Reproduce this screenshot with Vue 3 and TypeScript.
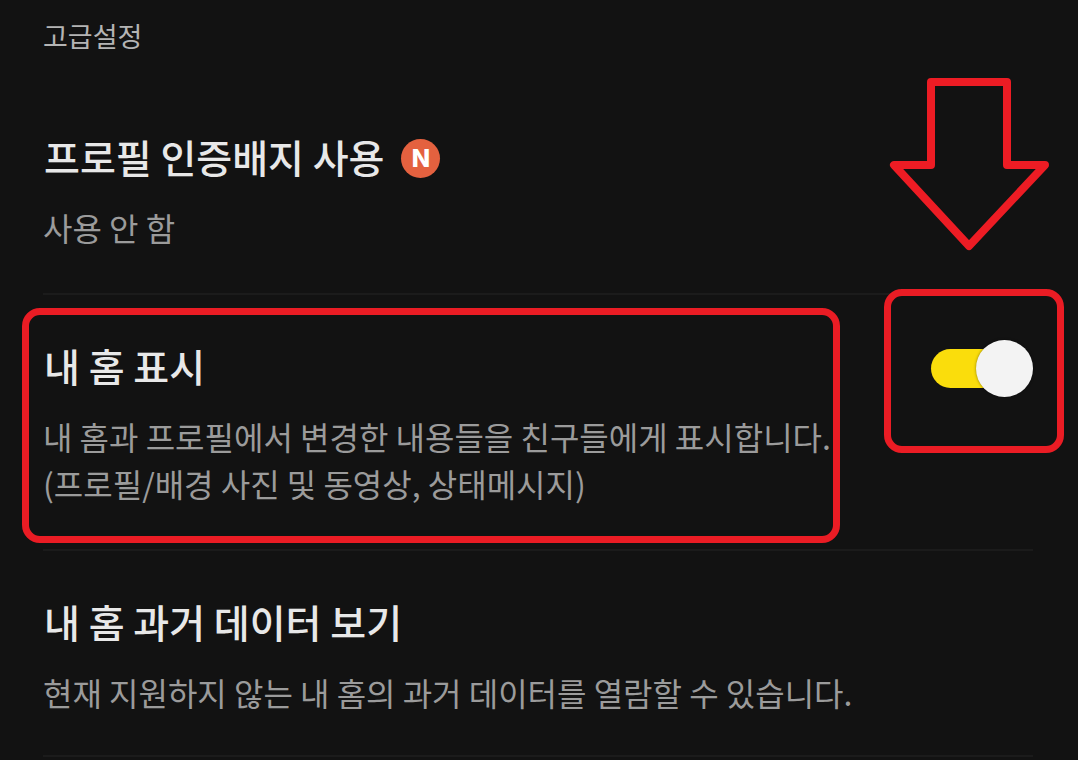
<script setup lang="ts">
import { ref } from 'vue'

const showHome = ref<boolean>(true)
</script>

<template>
  <main class="settings">
    <h1 class="section-title">고급설정</h1>

    <section class="row first">
      <div class="copy">
        <h2 class="title">프로필 인증배지 사용 <span class="badge">N</span></h2>
        <p class="desc">사용 안 함</p>
      </div>
    </section>

    <section class="row">
      <div class="copy">
        <h2 class="title"><label for="show-home">내 홈 표시</label></h2>
        <p id="show-home-desc" class="desc">
          내 홈과 프로필에서 변경한 내용들을 친구들에게 표시합니다.<br />(프로필/배경 사진 및 동영상, 상태메시지)
        </p>
        <span class="mark mark-copy" aria-hidden="true"></span>
      </div>
      <div class="control">
        <input
          id="show-home"
          v-model="showHome"
          class="switch"
          type="checkbox"
          role="switch"
          aria-describedby="show-home-desc"
        />
        <span class="mark mark-switch" aria-hidden="true"></span>
        <svg class="arrow" width="160" height="174" viewBox="0 0 160 174" aria-hidden="true">
          <path
            d="M42 5H118V88H156L80 169L5 88H42Z"
            fill="none"
            stroke="#ed1c24"
            stroke-width="8"
            stroke-linejoin="round"
          />
        </svg>
      </div>
    </section>

    <section class="row last">
      <div class="copy">
        <h2 class="title">내 홈 과거 데이터 보기</h2>
        <p class="desc">현재 지원하지 않는 내 홈의 과거 데이터를 열람할 수 있습니다.</p>
      </div>
    </section>
  </main>
</template>

<style>
body {
  margin: 0;
  background: #121212;
}
</style>

<style scoped>
.settings {
  box-sizing: border-box;
  min-height: 100vh;
  padding: 16px 45px 0 43px;
  overflow: hidden;
  background: #121212;
  color: #e8e8e8;
  font-family: 'Noto Sans CJK KR', sans-serif;
}

.section-title {
  margin: 0;
  color: #b4b4b4;
  font-size: 27px;
  font-weight: 400;
  line-height: 40px;
}

.row {
  display: flex;
  justify-content: space-between;
  padding: 45px 0 42px;
  border-bottom: 2px solid #1b1b1b;
}

.row.first {
  padding-top: 75px;
}

.row.last {
  padding-bottom: 39px;
}

.copy {
  position: relative;
}

.title {
  display: flex;
  align-items: center;
  gap: 17px;
  margin: 0 0 23px;
  padding-left: 1px;
  font-size: 39px;
  font-weight: 500;
  line-height: 50px;
}

.badge {
  width: 39px;
  height: 39px;
  margin-top: 4px;
  border-radius: 50%;
  background: #e4613f;
  color: #fff;
  font-family: Inter, sans-serif;
  font-size: 24px;
  font-weight: 800;
  line-height: 39px;
  text-align: center;
}

.desc {
  margin: 0;
  color: #9b9b9b;
  font-size: 32px;
  line-height: 47px;
}

.control {
  position: relative;
  flex: none;
  width: 102px;
  height: 57px;
}

.switch {
  position: relative;
  display: block;
  width: 100%;
  height: 100%;
  margin: 0;
  appearance: none;
  cursor: pointer;
}

.switch::before {
  content: '';
  position: absolute;
  inset: 9px 8px 9px 0;
  border-radius: 20px;
  background: #555;
}

.switch::after {
  content: '';
  position: absolute;
  top: 0;
  left: 0;
  width: 57px;
  height: 57px;
  border-radius: 50%;
  background: #f3f3f3;
  box-shadow: 0 0 3px rgba(0, 0, 0, 0.45);
}

.switch:checked::before {
  background: #fadd0c;
}

.switch:checked::after {
  right: 0;
  left: auto;
}

.mark {
  position: absolute;
  border: 7px solid #ea1c24;
  border-radius: 18px;
  pointer-events: none;
}

.mark-copy {
  inset: -32px -9px -36px -21px;
}

.mark-switch {
  inset: -51px -31px -56px -47px;
}

.arrow {
  position: absolute;
  right: -16px;
  bottom: 146px;
  pointer-events: none;
}
</style>
